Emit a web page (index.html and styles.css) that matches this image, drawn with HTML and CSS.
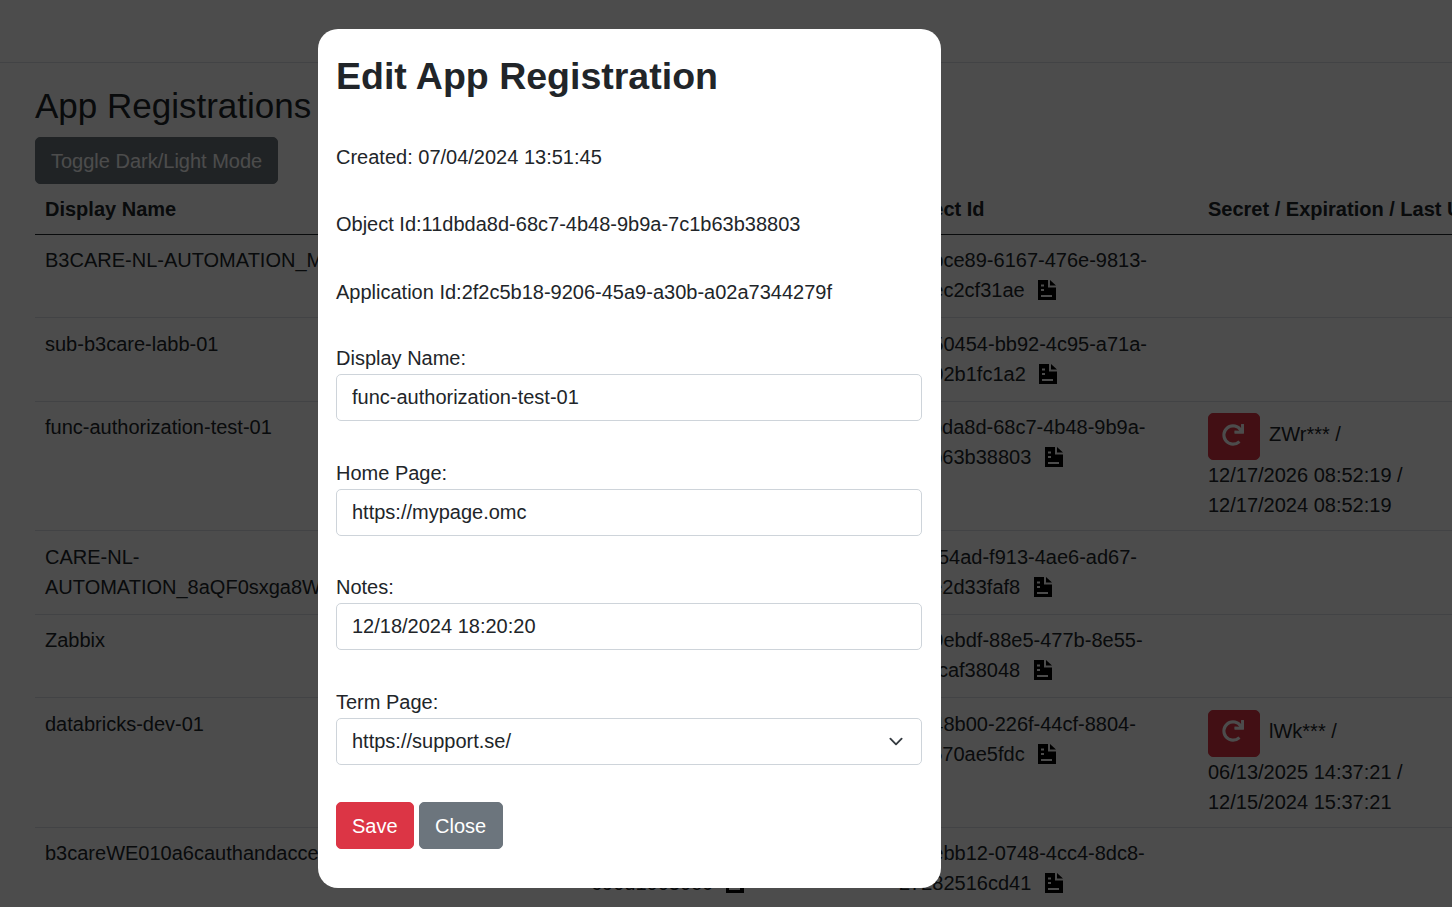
FILE: index.html
```html
<!DOCTYPE html>
<html lang="en">
<head>
<meta charset="utf-8">
<title>App Registrations</title>
<link rel="stylesheet" href="styles.css">
</head>
<body>
<svg class="defs" width="0" height="0" aria-hidden="true">
  <symbol id="doc" viewBox="0 0 18 20"><path fill-rule="evenodd" d="M0 0H10V7.5H18V20H0ZM3 4.5V6.5H6V4.5ZM3 9V11H6V9ZM3 15V17H14V15Z"/><path d="M12 0L18 5.5H12Z"/></symbol>
  <symbol id="redo" viewBox="0 0 512 512"><path d="M500.33 0h-47.41a12 12 0 0 0-12 12.57l4 82.76A247.42 247.42 0 0 0 256 8C119.34 8 8.05 119.53 8 256.19 8 393 119 504 256 504a247.1 247.1 0 0 0 166.18-63.91 12 12 0 0 0 .48-17.43l-34-34a12 12 0 0 0-16.38-.55A176 176 0 1 1 402.1 157.8l-101.53-4.87a12 12 0 0 0-12.57 12v47.41a12 12 0 0 0 12 12h200.33a12 12 0 0 0 12-12V12a12 12 0 0 0-12-12z"/></symbol>
</svg>
<header class="topbar"></header>
<main class="page">
  <h2 class="page-title">App Registrations</h2>
  <button class="btn btn-secondary" type="button">Toggle Dark/Light Mode</button>
  <table class="apps">
    <colgroup><col class="c-name"><col class="c-app"><col class="c-obj"><col class="c-secret"></colgroup>
    <thead>
      <tr><th>Display Name</th><th>Application Id</th><th>Object Id</th><th>Secret / Expiration / Last Used</th></tr>
    </thead>
    <tbody>
      <tr>
        <td>B3CARE-NL-AUTOMATION_MxT2kQe</td>
        <td>5d1e7a20-3b4c-4f12-8a6d-<br>41c07be92d15 <svg class="doc"><use href="#doc"/></svg></td>
        <td>8a9bce89-6167-476e-9813-<br>7d1ec2cf31ae <svg class="doc"><use href="#doc"/></svg></td>
        <td></td>
      </tr>
      <tr>
        <td>sub-b3care-labb-01</td>
        <td>c2f84e11-90ab-47d3-b6e5-<br>83fd2a6017bc <svg class="doc"><use href="#doc"/></svg></td>
        <td>a1b50454-bb92-4c95-a71a-<br>a4d02b1fc1a2 <svg class="doc"><use href="#doc"/></svg></td>
        <td></td>
      </tr>
      <tr>
        <td>func-authorization-test-01</td>
        <td>2f2c5b18-9206-45a9-a30b-<br>a02a7344279f <svg class="doc"><use href="#doc"/></svg></td>
        <td>11dbda8d-68c7-4b48-9b9a-<br>7c1b63b38803 <svg class="doc"><use href="#doc"/></svg></td>
        <td>
          <div class="secret"><button class="btn btn-danger btn-icon" type="button" aria-label="Renew"><svg class="redo"><use href="#redo"/></svg></button><span>ZWr*** /</span></div>
          <div class="dates">12/17/2026 08:52:19 /<br>12/17/2024 08:52:19</div>
        </td>
      </tr>
      <tr>
        <td>CARE-NL-<br>AUTOMATION_8aQF0sxga8WkLm</td>
        <td>7be1d392-44c0-4e8a-9d17-<br>60af31c8e2d4 <svg class="doc"><use href="#doc"/></svg></td>
        <td>3f7d54ad-f913-4ae6-ad67-<br>c08e2d33faf8 <svg class="doc"><use href="#doc"/></svg></td>
        <td></td>
      </tr>
      <tr>
        <td>Zabbix</td>
        <td>e40a9c67-1d25-4b38-a0f2-<br>9c47e1b05d36 <svg class="doc"><use href="#doc"/></svg></td>
        <td>7a19ebdf-88e5-477b-8e55-<br>12f4caf38048 <svg class="doc"><use href="#doc"/></svg></td>
        <td></td>
      </tr>
      <tr>
        <td>databricks-dev-01</td>
        <td>16d3f0b8-72ea-4c91-b45d-<br>2e8a90c7f416 <svg class="doc"><use href="#doc"/></svg></td>
        <td>e1d48b00-226f-44cf-8804-<br>b3c570ae5fdc <svg class="doc"><use href="#doc"/></svg></td>
        <td>
          <div class="secret"><button class="btn btn-danger btn-icon" type="button" aria-label="Renew"><svg class="redo"><use href="#redo"/></svg></button><span>lWk*** /</span></div>
          <div class="dates">06/13/2025 14:37:21 /<br>12/15/2024 15:37:21</div>
        </td>
      </tr>
      <tr>
        <td>b3careWE010a6cauthandaccess</td>
        <td>a83c61f4-5e07-4d29-97b1-<br>690d10030ec <svg class="doc"><use href="#doc"/></svg></td>
        <td>64aebb12-0748-4cc4-8dc8-<br>27282516cd41 <svg class="doc"><use href="#doc"/></svg></td>
        <td></td>
      </tr>
    </tbody>
  </table>
</main>
<div class="backdrop"></div>
<section class="modal" role="dialog" aria-label="Edit App Registration">
  <h1 class="modal-title">Edit App Registration</h1>
  <p class="info">Created: 07/04/2024 13:51:45</p>
  <p class="info">Object Id:11dbda8d-68c7-4b48-9b9a-7c1b63b38803</p>
  <p class="info">Application Id:2f2c5b18-9206-45a9-a30b-a02a7344279f</p>
  <div class="field">
    <label class="label" for="f-name">Display Name:</label>
    <input class="control" id="f-name" type="text" value="func-authorization-test-01">
  </div>
  <div class="field">
    <label class="label" for="f-home">Home Page:</label>
    <input class="control" id="f-home" type="text" value="https://mypage.omc">
  </div>
  <div class="field">
    <label class="label" for="f-notes">Notes:</label>
    <input class="control" id="f-notes" type="text" value="12/18/2024 18:20:20">
  </div>
  <div class="field">
    <label class="label" for="f-term">Term Page:</label>
    <select class="control select" id="f-term"><option>https://support.se/</option></select>
  </div>
  <div class="actions">
    <button class="btn btn-danger" type="button">Save</button>
    <button class="btn btn-secondary" type="button">Close</button>
  </div>
</section>
</body>
</html>
```

FILE: styles.css
```css
* { box-sizing: border-box; }
html, body { height: 100%; }
body {
  margin: 0;
  overflow: hidden;
  background: #fff;
  color: #212529;
  font-family: "Liberation Sans", Arial, sans-serif;
  font-size: 20px;
  line-height: 30px;
}
.defs { position: absolute; }
.topbar { height: 63px; border-bottom: 1px solid #dee2e6; }
.page { padding: 0 0 0 35px; }
.page-title {
  margin: 21px 0 9px;
  font-size: 35px;
  line-height: 44px;
  font-weight: 400;
}
.btn {
  display: inline-block;
  height: 47px;
  padding: 0 15px;
  border: 1px solid transparent;
  border-radius: 5px;
  color: #fff;
  font: inherit;
}
.btn-secondary { background: #6c757d; border-color: #6c757d; }
.btn-danger { background: #dc3545; border-color: #dc3545; }
.btn-icon { width: 52px; padding: 0 2px 4px 0; display: flex; align-items: center; justify-content: center; flex: none; }
.apps {
  table-layout: fixed;
  border-collapse: collapse;
  width: 1540px;
}
.c-name { width: 546px; }
.c-app { width: 308px; }
.c-obj { width: 309px; }
.apps th {
  padding: 9.5px 10px 10px;
  text-align: left;
  font-weight: 700;
  white-space: nowrap;
  border-bottom: 1px solid #212529;
}
.apps td {
  padding: 10.75px 10px 11.75px;
  vertical-align: top;
  border-bottom: 1px solid #dee2e6;
}
.doc { width: 18px; height: 20px; margin-left: 8px; vertical-align: -3px; fill: #000; }
.redo { width: 22px; height: 22px; fill: #fff; }
.secret { display: flex; height: 47px; margin-top: 1px; gap: 9px; align-items: flex-start; }
.secret span { padding-top: 6px; }
.dates { margin-bottom: -2px; }
.backdrop { position: fixed; inset: 0; background: rgba(0, 0, 0, .7); }
.modal {
  position: fixed;
  left: 318px;
  top: 29px;
  width: 623px;
  height: 859px;
  padding: 18.75px 19px 18.75px 18px;
  background: #fff;
  border-radius: 20px;
}
.modal-title {
  margin: 0 0 38px;
  font-size: 37.5px;
  line-height: 56px;
  font-weight: 700;
}
.info { margin: 0 0 37.5px; }
.field { margin-bottom: 37.5px; }
.label { display: block; line-height: 28px; margin-bottom: 2px; }
.control {
  display: block;
  width: 100%;
  height: 47px;
  padding: 0 15px 0 15px;
  border: 1px solid #ced4da;
  border-radius: 5px;
  background: #fff;
  color: #212529;
  font: inherit;
}
.select {
  appearance: none;
  background-image: url("data:image/svg+xml,%3csvg xmlns='http://www.w3.org/2000/svg' viewBox='0 0 16 16'%3e%3cpath fill='none' stroke='%23343a40' stroke-linecap='round' stroke-linejoin='round' stroke-width='2' d='m2 5 6 6 6-6'/%3e%3c/svg%3e");
  background-repeat: no-repeat;
  background-position: right 15px center;
  background-size: 20px 15px;
}
.actions { display: flex; gap: 5px; }
.actions .btn-secondary { padding: 0 15.5px; }
```
